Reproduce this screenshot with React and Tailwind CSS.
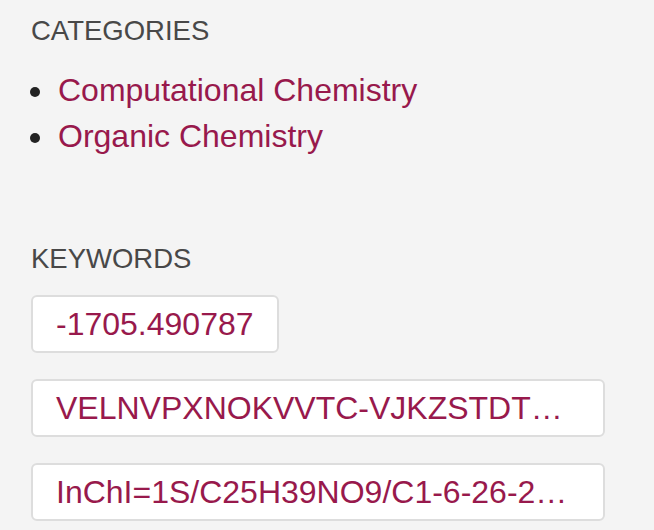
export default function App() {
  const cats = ["Computational Chemistry", "Organic Chemistry"];
  const kws = [
    "-1705.490787",
    "VELNVPXNOKVVTC-VJKZSTDTSA-N",
    "InChI=1S/C25H39NO9/C1-6-26-21-13-9-7-8-10-14",
  ];
  return (
    <div
      className="w-[654px] h-[530px] overflow-hidden bg-[#f4f4f4] pl-[31px] pt-[16px]"
      style={{ fontFamily: '"Liberation Sans", Arial, Helvetica, sans-serif' }}
    >
      <h2 className="text-[27.5px] leading-[30px] text-[#484848] font-normal">CATEGORIES</h2>
      <ul className="mt-[21px] flex flex-col">
        {cats.map((c) => (
          <li key={c} className="flex items-start">
            <span className="mt-[20px] -ml-[1px] h-[10px] w-[10px] shrink-0 rounded-full bg-[#222]" />
            <span className="ml-[18px] text-[32px] leading-[46px] text-[#98194c]">{c}</span>
          </li>
        ))}
      </ul>
      <h2 className="mt-[85px] text-[27.5px] leading-[30px] text-[#484848] font-normal">KEYWORDS</h2>
      <div className="mt-[21px] flex flex-col items-start gap-[26px]">
        {kws.map((k) => (
          <div
            key={k}
            className="max-w-[574px] overflow-hidden text-ellipsis whitespace-nowrap rounded-[6px] border-2 border-[#dddddd] bg-white px-[23px] py-[4px] text-[32px] leading-[46px] text-[#98194c]"
          >
            {k}
          </div>
        ))}
      </div>
    </div>
  );
}
